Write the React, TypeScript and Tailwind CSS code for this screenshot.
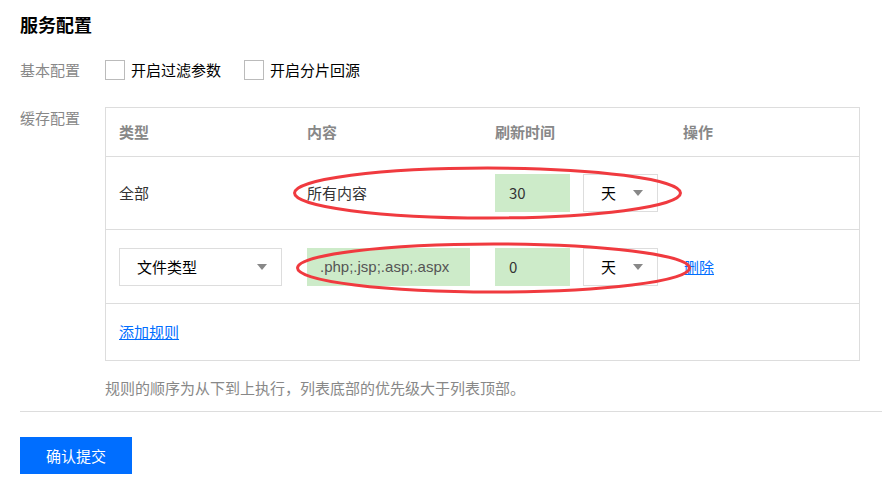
import React from 'react';

const font = { fontFamily: '"Noto Sans CJK SC", "Liberation Sans", sans-serif' };

const Arrow = () => (
  <svg width="10" height="6" viewBox="0 0 10 6" className="flex-shrink-0">
    <path d="M0 0 L10 0 L5 6 Z" fill="#888" />
  </svg>
);

const UnitSelect = () => (
  <div className="w-[75px] h-[38px] border border-[#ddd] bg-white flex items-center justify-between pl-[17px] pr-[14px] text-[#000]">
    <span>天</span>
    <Arrow />
  </div>
);

const Checkbox = ({ label }: { label: string }) => (
  <label className="flex items-center gap-[6px] text-[#000]">
    <span className="w-5 h-5 border border-[#bbb] bg-white" />
    <span>{label}</span>
  </label>
);

export default function App() {
  return (
    <div className="relative w-[882px] h-[494px] bg-white text-[15px] leading-5 overflow-hidden" style={font}>
      <div className="pl-5 pt-3">
        {/* Title */}
        <h2 className="text-lg leading-6 font-bold text-black">服务配置</h2>

        {/* Basic */}
        <div className="flex items-center mt-6 h-5">
          <div className="w-[85px] text-[#888]">基本配置</div>
          <div className="flex items-center gap-[23px]">
            <Checkbox label="开启过滤参数" />
            <Checkbox label="开启分片回源" />
          </div>
        </div>

        {/* Cache */}
        <div className="flex mt-[27px]">
          <div className="w-[85px] pt-px text-[#888]">缓存配置</div>
          <div>
            <div className="w-[755px] border border-[#ddd]">
              <div className="grid grid-cols-[188px_188px_188px_1fr] pl-[13px] h-[49px] items-center font-bold text-[#888] border-b border-[#ddd]">
                <span>类型</span>
                <span>内容</span>
                <span>刷新时间</span>
                <span>操作</span>
              </div>
              <div className="grid grid-cols-[188px_188px_188px_1fr] pl-[13px] h-[73px] items-center text-[#333] border-b border-[#ddd]">
                <span>全部</span>
                <span>所有内容</span>
                <div className="flex items-center gap-[13px] col-span-2">
                  <div className="w-[75px] h-[38px] bg-[#cdebc9] flex items-center pl-[14px]">30</div>
                  <UnitSelect />
                </div>
              </div>
              <div className="grid grid-cols-[188px_188px_188px_1fr] pl-[13px] h-[74px] items-center text-[#333] border-b border-[#ddd]">
                <div className="w-[163px] h-[38px] border border-[#ddd] flex items-center justify-between pl-[17px] pr-[14px] text-[#000]">
                  <span>文件类型</span>
                  <Arrow />
                </div>
                <div
                  className="w-[163px] h-[38px] bg-[#cdebc9] flex items-center pl-[13px] text-[#555]"
                  style={{ fontFamily: '"Liberation Sans", Arial, sans-serif' }}
                >
                  .php;.jsp;.asp;.aspx
                </div>
                <div className="flex items-center gap-[13px] col-span-2">
                  <div className="w-[75px] h-[38px] bg-[#cdebc9] flex items-center pl-[14px]">0</div>
                  <UnitSelect />
                  <a href="#" className="text-[#006eff] underline ml-[13px]">删除</a>
                </div>
              </div>
              <div className="pl-[13px] h-[56px] flex items-center">
                <a href="#" className="text-[#006eff] underline">添加规则</a>
              </div>
            </div>
            <p className="mt-[17px] text-[#888]">规则的顺序为从下到上执行，列表底部的优先级大于列表顶部。</p>
          </div>
        </div>

        <div className="mt-[13px] border-t border-[#ddd]" />

        <button className="mt-[25px] w-28 h-[37px] bg-[#006eff] text-white">确认提交</button>
      </div>

      {/* Annotations */}
      <svg className="absolute inset-0 pointer-events-none" width="882" height="494">
        <ellipse cx="487.5" cy="193" rx="193" ry="25" fill="none" stroke="#f03a3f" strokeWidth="3" />
        <ellipse cx="493.5" cy="268" rx="196" ry="24" fill="none" stroke="#f03a3f" strokeWidth="3" />
      </svg>
    </div>
  );
}
